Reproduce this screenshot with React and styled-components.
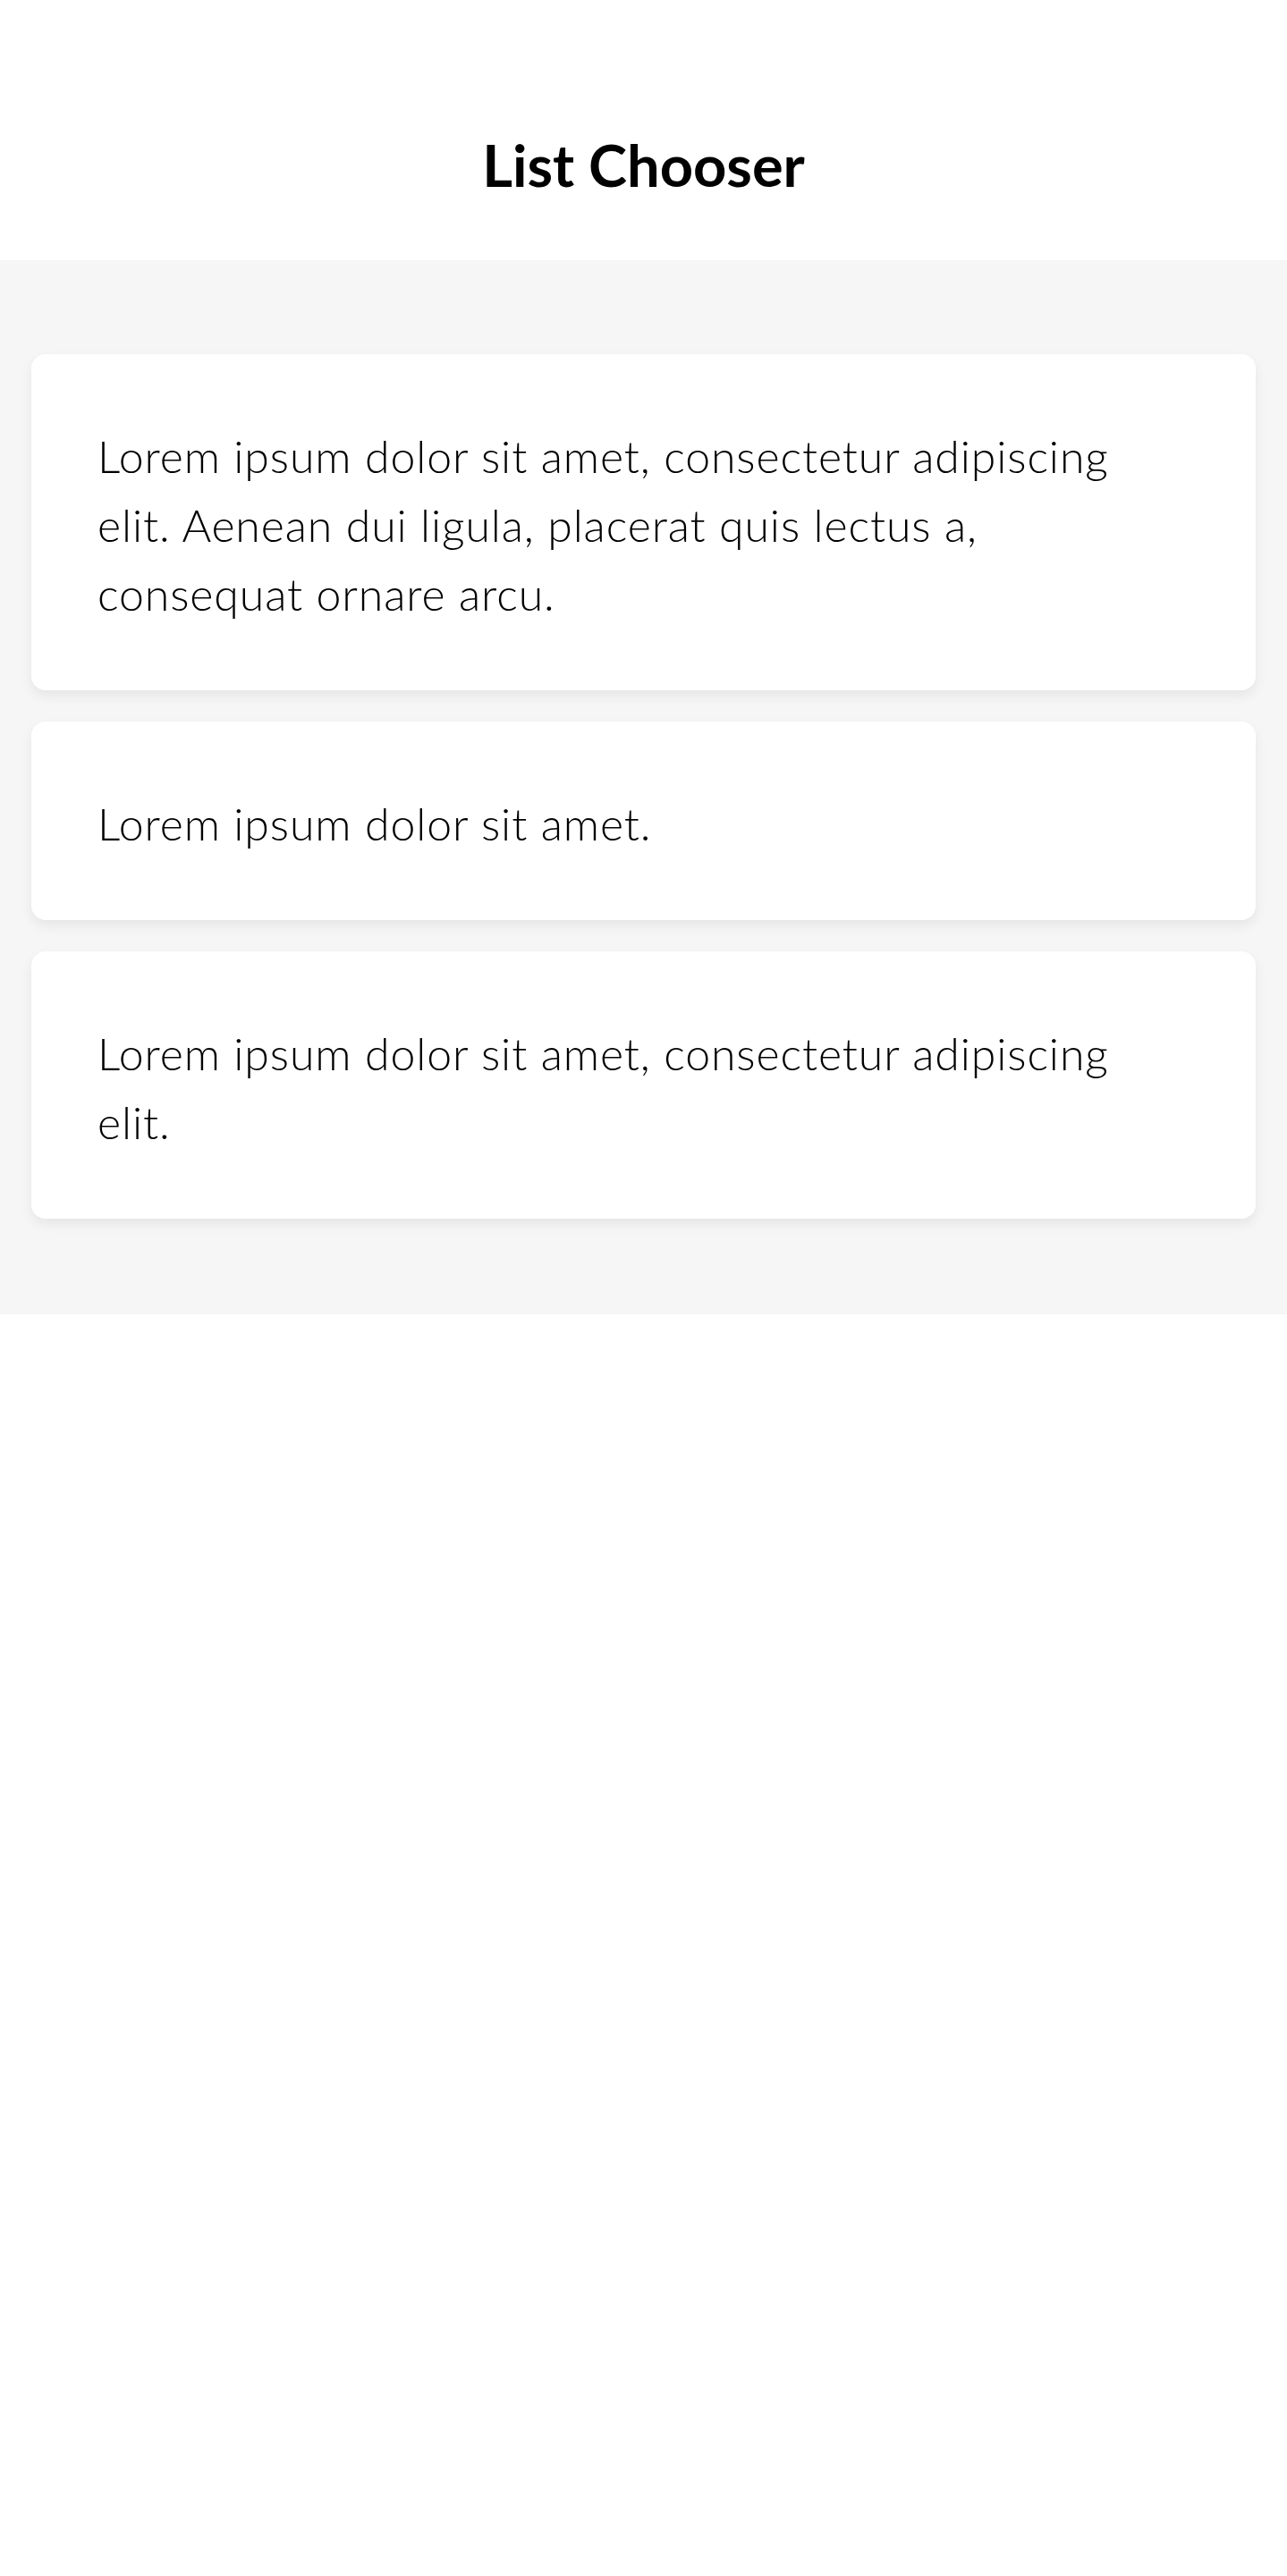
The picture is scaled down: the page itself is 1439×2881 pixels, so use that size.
import React from "react";
import styled, { createGlobalStyle } from "styled-components";

const GlobalStyle = createGlobalStyle`
  * { box-sizing: border-box; }
  html, body { margin: 0; padding: 0; background: #ffffff; }
  body { font-family: Lato, "Open Sans", sans-serif; color: #000; -webkit-font-smoothing: antialiased; }
`;

const Page = styled.div`
  display: flex;
  flex-direction: column;
  min-height: 2881px;
  background: #ffffff;
`;

const Header = styled.header`
  height: 291px;
  display: flex;
  align-items: center;
  justify-content: center;
  padding-top: 78px;
  background: #ffffff;
`;

const Title = styled.h1`
  margin: 0;
  font-family: Lato, sans-serif;
  font-weight: 700;
  font-size: 65px;
  line-height: 1;
  color: #000;
`;

const ListSection = styled.main`
  display: flex;
  flex-direction: column;
  gap: 35px;
  padding: 105px 35px 107px;
  background: #f6f6f6;
`;

const Card = styled.button`
  display: block;
  width: 100%;
  text-align: left;
  border: none;
  background: #ffffff;
  border-radius: 16px;
  padding: 76px 75px 69px 74px;
  box-shadow: 0 6px 14px rgba(0, 0, 0, 0.07);
  cursor: pointer;
  font: inherit;
`;

const CardText = styled.p`
  margin: 0;
  font-family: Lato, sans-serif;
  font-weight: 300;
  font-size: 50px;
  letter-spacing: 0.9px;
  line-height: 77px;
  color: #000;
`;

const items = [
  "Lorem ipsum dolor sit amet, consectetur adipiscing elit. Aenean dui ligula, placerat quis lectus a, consequat ornare arcu.",
  "Lorem ipsum dolor sit amet.",
  "Lorem ipsum dolor sit amet, consectetur adipiscing elit.",
];

export default function App() {
  return (
    <>
      <GlobalStyle />
      <Page>
        <Header>
          <Title>List Chooser</Title>
        </Header>
        <ListSection>
          {items.map((text, i) => (
            <Card key={i} type="button">
              <CardText>{text}</CardText>
            </Card>
          ))}
        </ListSection>
      </Page>
    </>
  );
}
